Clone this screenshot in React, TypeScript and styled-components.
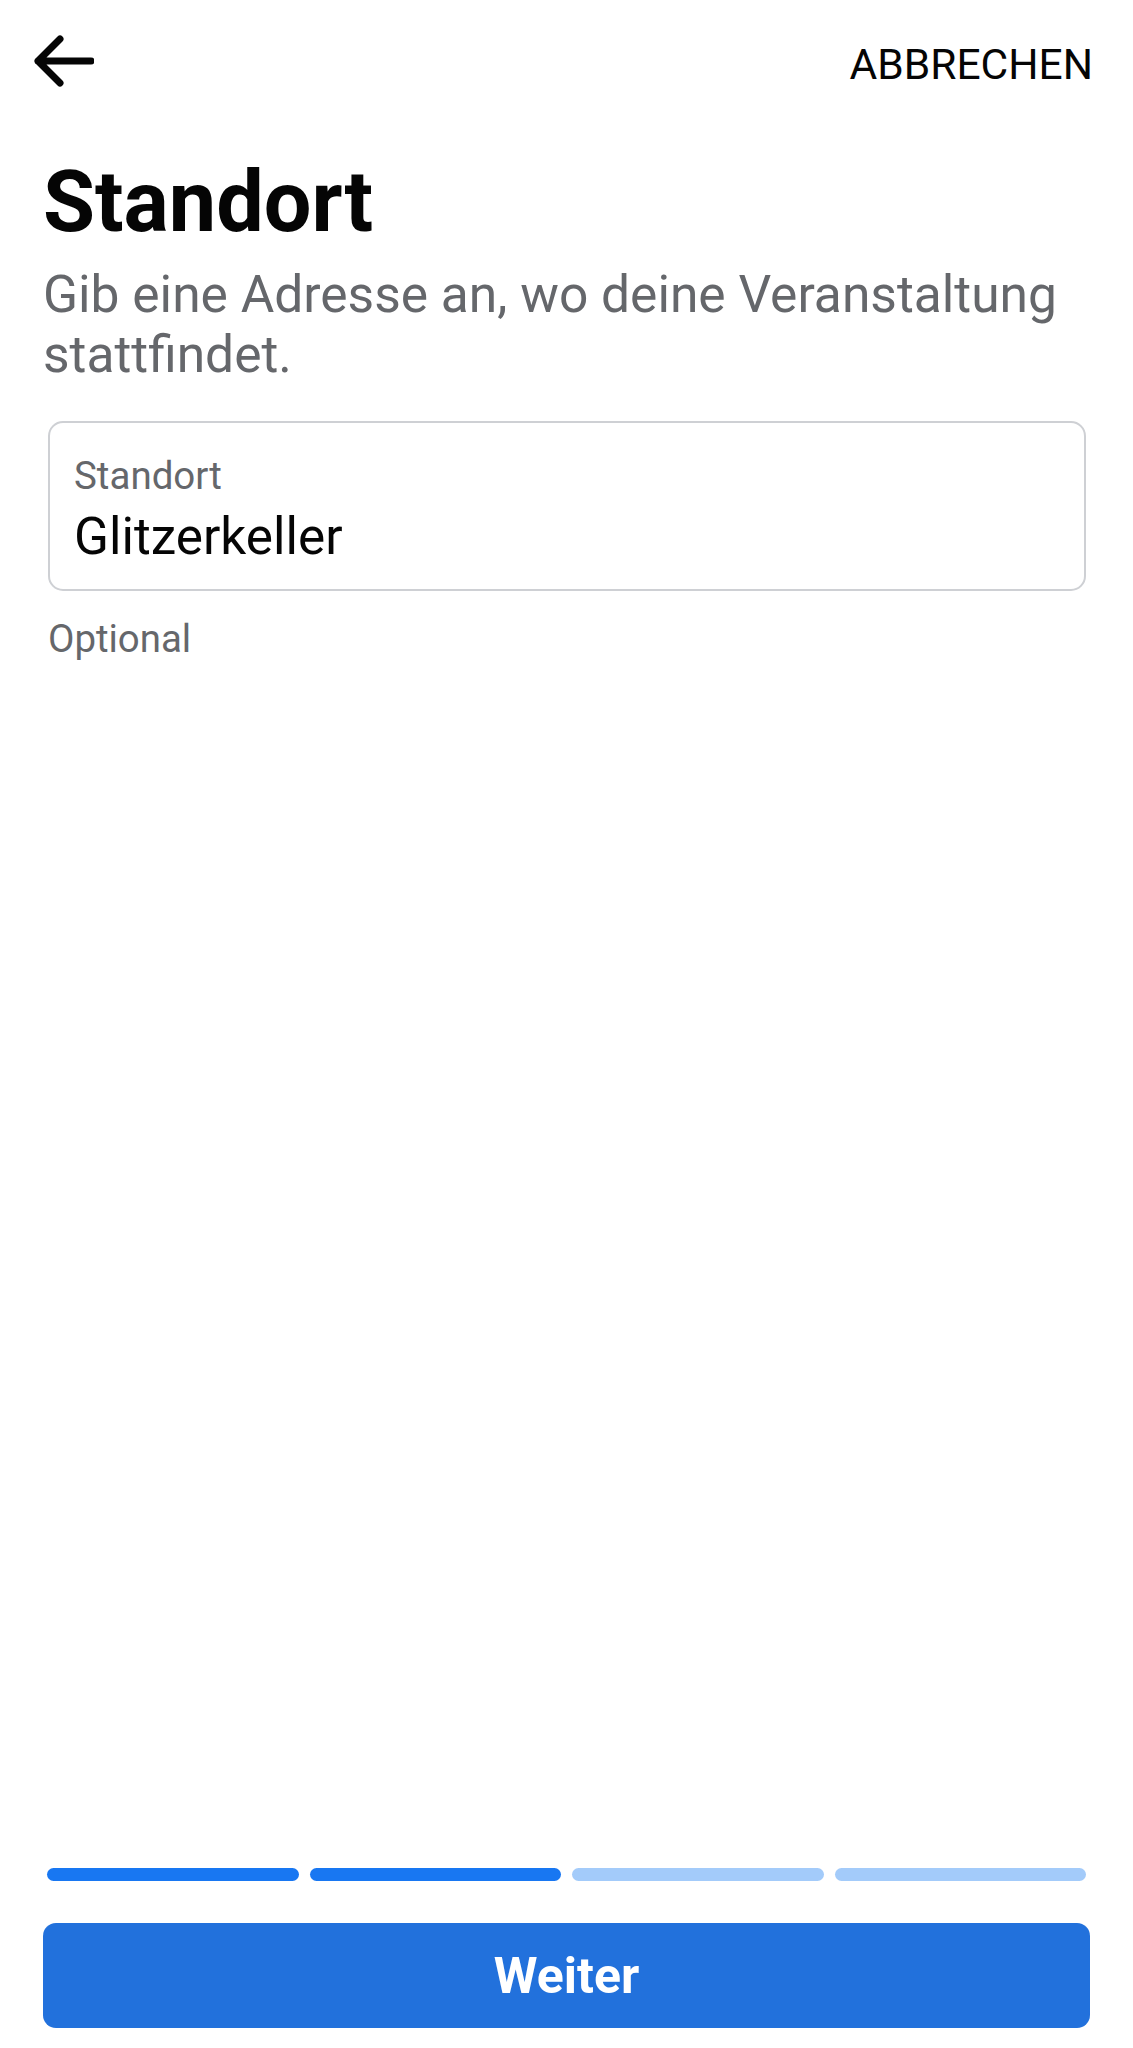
import React from 'react'
import styled, { createGlobalStyle } from 'styled-components'

const Global = createGlobalStyle`
    html, body {
        margin: 0;
        padding: 0;
        background: #ffffff;
    }
    body {
        font-family: Roboto, "Liberation Sans", sans-serif;
        color: #050505;
    }
`

const Screen = styled.div`
    box-sizing: border-box;
    height: 100vh;
    min-height: 2048px;
    display: flex;
    flex-direction: column;
    padding: 0 43px 20px 43px;
`
const Header = styled.div`
    height: 124px;
    display: flex;
    align-items: center;
    justify-content: space-between;
`
const BackBtn = styled.button`
    border: none;
    background: none;
    padding: 0;
    margin-left: -11px;
    width: 64px;
    height: 64px;
    display: flex;
    align-items: center;
    justify-content: center;
    margin-top: -2px;
`
const CancelBtn = styled.button`
    border: none;
    background: none;
    padding: 0;
    margin-right: -3px;
    margin-top: 4px;
    font-family: Roboto, "Liberation Sans", sans-serif;
    font-size: 42.5px;
    color: #050505;
    letter-spacing: 0;
`
const Title = styled.h1`
    margin: 29px 0 0 0;
    font-size: 84.5px;
    line-height: 100px;
    font-weight: 700;
    color: #050505;
`
const Subtitle = styled.p`
    margin: 12px 0 0 0;
    font-size: 51.5px;
    line-height: 60px;
    color: #65676b;
`
const Field = styled.div`
    margin: 36px 4px 0 5px;
    border: 2px solid #ced0d4;
    border-radius: 15px;
    padding: 30px 24px 22px 24px;
    display: flex;
    flex-direction: column;
`
const FieldLabel = styled.span`
    font-size: 38.5px;
    line-height: 45px;
    color: #65676b;
`
const FieldValue = styled.span`
    margin-top: 8px;
    font-size: 51.3px;
    line-height: 61px;
    color: #050505;
`
const Hint = styled.div`
    margin: 25px 0 0 5px;
    font-size: 38.4px;
    line-height: 45px;
    color: #65676b;
`
const Spacer = styled.div`
    flex: 1;
`
const Progress = styled.div`
    margin: 0 4px;
    display: grid;
    grid-template-columns: repeat(4, 1fr);
    gap: 11px;
`
const Step = styled.div<{ $done: boolean }>`
    height: 13px;
    border-radius: 7px;
    background: ${({ $done }) => $done ? '#1877f2' : '#a3cbfa'};
`
const NextBtn = styled.button`
    margin-top: 42px;
    height: 105px;
    border: none;
    border-radius: 13px;
    background: #2271dc;
    color: #ffffff;
    font-family: Roboto, "Liberation Sans", sans-serif;
    font-size: 50px;
    font-weight: 700;
`

const steps = [true, true, false, false]

export default function App() {
    return <Screen>
        <Global />
        <Header>
            <BackBtn aria-label='Zurück'>
                <svg width='60' height='52' viewBox='0 0 60 52' fill='none'>
                    <path d='M26 4 L4 26 L26 48 M4 26 H57' stroke='#050505' strokeWidth='7' strokeLinecap='round' strokeLinejoin='round' />
                </svg>
            </BackBtn>
            <CancelBtn>ABBRECHEN</CancelBtn>
        </Header>
        <Title>Standort</Title>
        <Subtitle>Gib eine Adresse an, wo deine Veranstaltung stattfindet.</Subtitle>
        <Field>
            <FieldLabel>Standort</FieldLabel>
            <FieldValue>Glitzerkeller</FieldValue>
        </Field>
        <Hint>Optional</Hint>
        <Spacer />
        <Progress>
            {steps.map((done, i) => <Step key={i} $done={done} />)}
        </Progress>
        <NextBtn>Weiter</NextBtn>
    </Screen>
}
